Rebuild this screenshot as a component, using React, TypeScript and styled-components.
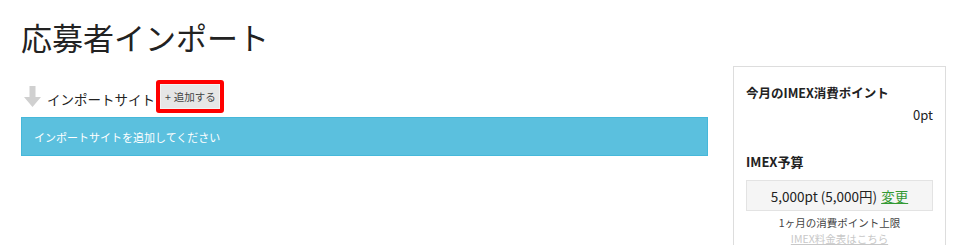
import styled, { createGlobalStyle } from 'styled-components';

const GlobalStyle = createGlobalStyle`
  html, body {
    margin: 0;
    padding: 0;
    background: #fff;
  }
  body {
    font-family: 'Noto Sans CJK JP', 'Noto Sans', sans-serif;
    color: #333;
  }
`;

const Page = styled.div({
  padding: '0 16px 0 21px',
  width: '962px',
  boxSizing: 'border-box',
  height: '245px',
  overflow: 'hidden',
});

const Title = styled.h1({
  margin: 0,
  paddingTop: '15px',
  fontSize: '31px',
  fontWeight: 400,
  lineHeight: '44px',
  color: '#222',
});

const Columns = styled.div({
  display: 'flex',
  alignItems: 'flex-start',
  gap: '25px',
  marginTop: '7px',
});

const Main = styled.main({
  width: '687px',
  paddingTop: '14px',
});

const SectionHead = styled.div({
  display: 'flex',
  alignItems: 'center',
  gap: '1px',
  height: '33px',
});

const HeadIcon = styled.svg({
  width: '17px',
  height: '21px',
  margin: '0 5px 0 3px',
});

const HeadLabel = styled.span({
  fontSize: '13.5px',
  color: '#222',
  marginTop: '4px',
});

const AddButton = styled.button({
  display: 'flex',
  alignItems: 'center',
  gap: '3px',
  height: '33px',
  boxSizing: 'border-box',
  padding: '0 4px 0 5px',
  border: '4px solid #ff0000',
  borderRadius: '3px',
  background: '#e6e6e6',
  boxShadow: 'inset 0 0 0 1px #f2f2f2',
  fontFamily: "'Noto Sans CJK JP', sans-serif",
  fontSize: '10.5px',
  color: '#444',
  cursor: 'pointer',
});

const Alert = styled.div({
  marginTop: '4px',
  height: '39px',
  boxSizing: 'border-box',
  background: '#5bc0de',
  border: '1px solid #46b8da',
  color: '#fff',
  fontSize: '11px',
  display: 'flex',
  alignItems: 'center',
  padding: '0 12px',
});

const Sidebar = styled.aside({
  width: '213px',
  height: '190px',
  boxSizing: 'border-box',
  border: '1px solid #ddd',
  borderBottom: 'none',
  padding: '0 12px',
});

const SideTitle = styled.h3({
  margin: 0,
  fontSize: '12.5px',
  fontWeight: 700,
  color: '#222',
  lineHeight: '18px',
  paddingTop: '17px',
});

const Points = styled.div({
  textAlign: 'right',
  fontSize: '13px',
  lineHeight: '18px',
  marginTop: '4px',
  color: '#222',
});

const BudgetTitle = styled(SideTitle)({
  fontSize: '13px',
  paddingTop: '29px',
});

const BudgetBox = styled.div({
  marginTop: '9px',
  height: '31px',
  boxSizing: 'border-box',
  background: '#f5f5f5',
  border: '1px solid #e3e3e3',
  display: 'flex',
  alignItems: 'center',
  justifyContent: 'center',
  fontSize: '13.5px',
  color: '#222',
});

const ChangeLink = styled.a({
  color: '#339933',
  textDecoration: 'underline',
  marginLeft: '4px',
});

const Note = styled.div<{ $muted?: boolean }>(({ $muted }) => ({
  textAlign: 'center',
  fontSize: '10.5px',
  lineHeight: '16px',
  color: $muted ? '#c8c8c8' : '#444',
  textDecoration: $muted ? 'underline' : 'none',
  marginTop: $muted ? '0' : '4px',
}));

function App() {
  return (
    <>
      <GlobalStyle />
      <Page>
        <Title>応募者インポート</Title>
        <Columns>
          <Main>
            <SectionHead>
              <HeadIcon viewBox="0 0 17 21">
                <path d="M5.5 0h6v11h5.5L8.5 21 0 11h5.5z" fill="#d0d0d0" />
              </HeadIcon>
              <HeadLabel>インポートサイト</HeadLabel>
              <AddButton>
                <span>+</span>
                <span>追加する</span>
              </AddButton>
            </SectionHead>
            <Alert>インポートサイトを追加してください</Alert>
          </Main>
          <Sidebar>
            <SideTitle>今月のIMEX消費ポイント</SideTitle>
            <Points>0pt</Points>
            <BudgetTitle>IMEX予算</BudgetTitle>
            <BudgetBox>
              5,000pt (5,000円)<ChangeLink href="#">変更</ChangeLink>
            </BudgetBox>
            <Note>1ヶ月の消費ポイント上限</Note>
            <Note $muted>IMEX料金表はこちら</Note>
          </Sidebar>
        </Columns>
      </Page>
    </>
  );
}

export default App;
